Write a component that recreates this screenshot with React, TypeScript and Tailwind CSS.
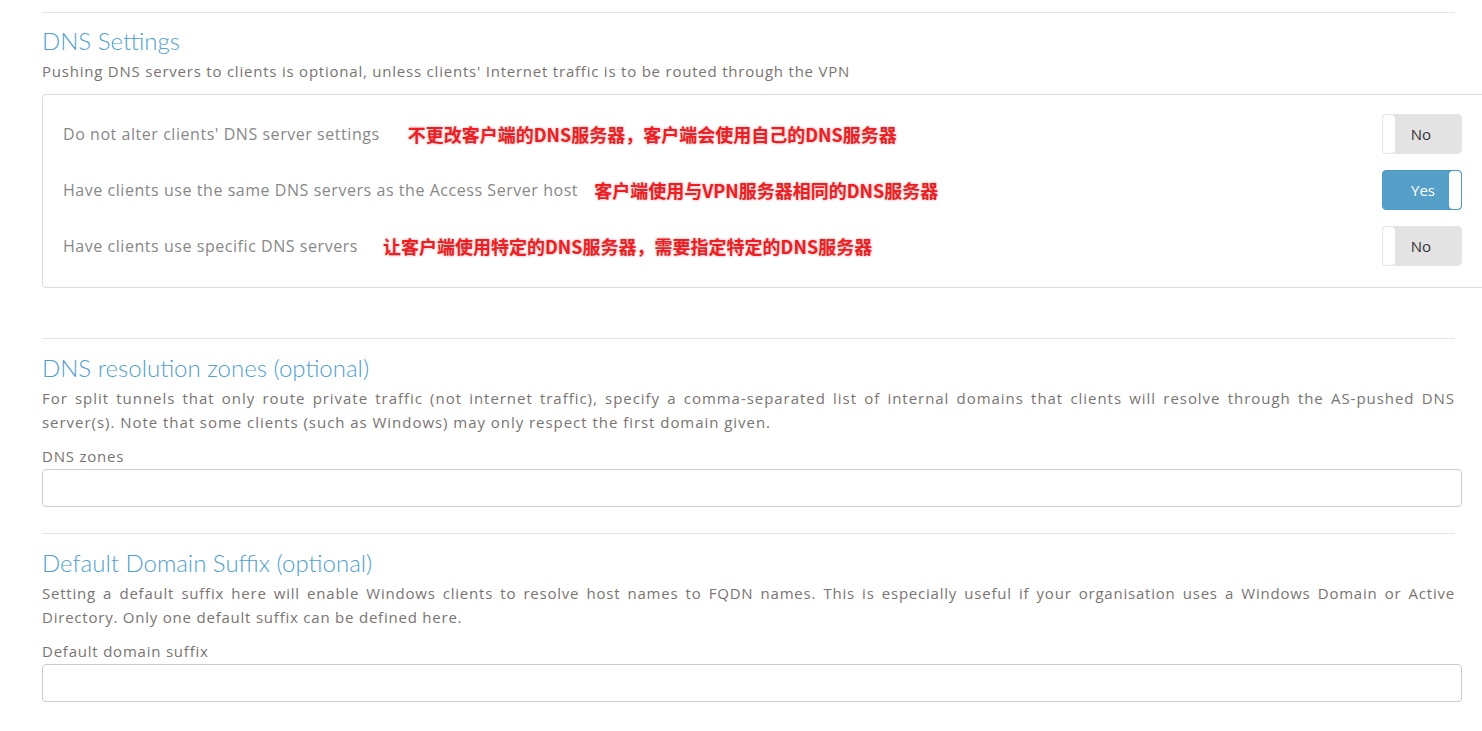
import React from 'react';

const body = { fontFamily: '"Open Sans", "Liberation Sans", sans-serif' };
const heading = { fontFamily: 'Lato, "Open Sans", sans-serif' };
const cjk = { fontFamily: '"Noto Sans CJK SC", "Noto Sans", sans-serif' };

type Row = { label: string; note: string; gap: string; on: boolean };

const rows: Row[] = [
  {
    label: "Do not alter clients' DNS server settings",
    note: '不更改客户端的DNS服务器，客户端会使用自己的DNS服务器',
    gap: 'ml-[28px]',
    on: false,
  },
  {
    label: 'Have clients use the same DNS servers as the Access Server host',
    note: '客户端使用与VPN服务器相同的DNS服务器',
    gap: 'ml-[16px]',
    on: true,
  },
  {
    label: 'Have clients use specific DNS servers',
    note: '让客户端使用特定的DNS服务器，需要指定特定的DNS服务器',
    gap: 'ml-[25px]',
    on: false,
  },
];

const Toggle = ({ on }: { on: boolean }) => {
  if (on) {
    return (
      <div className="flex h-[40px] w-[80px] items-stretch rounded-[4px] border border-[#4d97c2] bg-[#559fc9]">
        <span className="flex flex-1 items-center justify-center pl-[14px] text-[15px] text-white">Yes</span>
        <span className="w-[12px] rounded-[4px] bg-white" />
      </div>
    );
  }
  return (
    <div className="flex h-[40px] w-[80px] items-stretch rounded-[4px] border border-[#e6e6e6] bg-[#e3e3e3]">
      <span className="w-[12px] rounded-[4px] bg-white" />
      <span className="flex flex-1 items-center justify-center pr-[14px] text-[15px] text-[#333]">No</span>
    </div>
  );
};

const Section = ({
  title,
  text,
  label,
  tracking,
}: {
  title: string;
  text: string;
  label: string;
  tracking: string;
}) => (
  <div>
    <div className="mr-[7px] h-px bg-[#e5e5e5]" />
    <h2 style={heading} className="mt-[13px] text-[24px] font-light leading-[32px] text-[#4f9fcf]">
      {title}
    </h2>
    <p className={`mr-[7px] mt-[2px] text-justify text-[15px] leading-[24px] ${tracking} text-[#7a7471]`}>
      {text}
    </p>
    <div className="mt-[12px] text-[15px] leading-[20px] tracking-[0.78px] text-[#7a7471]">{label}</div>
    <input className="mt-[3px] block h-[38px] w-full rounded-[4px] border border-[#ccc] bg-white outline-none" />
  </div>
);

const App = () => {
  return (
    <div style={body} className="h-[731px] w-[1482px] overflow-hidden bg-white">
      <div className="ml-[42px] mr-[20px] pt-[12px]">
        {/* DNS Settings */}
        <div className="mr-[7px] h-px bg-[#e5e5e5]" />
        <h2 style={heading} className="mt-[12px] text-[24px] font-light leading-[32px] text-[#4f9fcf]">
          DNS Settings
        </h2>
        <p className="mt-[2px] text-[15px] leading-[24px] tracking-[0.78px] text-[#7a7471]">
          Pushing DNS servers to clients is optional, unless clients' Internet traffic is to be routed through the VPN
        </p>
        <div className="mr-[-40px] mt-[11px] flex flex-col gap-[16px] rounded-l-[4px] border border-[#dcdcdc] pb-[21px] pl-[20px] pr-[39px] pt-[19px]">
          {rows.map((r) => (
            <div key={r.label} className="flex items-center justify-between">
              <div className="flex items-center">
                <span className="text-[16px] tracking-[0.55px] text-[#888]">{r.label}</span>
                <span
                  style={cjk}
                  className={`${r.gap} text-[18px] font-bold text-[#f41c22] [text-shadow:0_0_3px_rgba(0,0,0,0.35)]`}
                >
                  {r.note}
                </span>
              </div>
              <Toggle on={r.on} />
            </div>
          ))}
        </div>

        <div className="mt-[50px]">
          <Section
            title="DNS resolution zones (optional)"
            text="For split tunnels that only route private traffic (not internet traffic), specify a comma-separated list of internal domains that clients will resolve through the AS-pushed DNS server(s). Note that some clients (such as Windows) may only respect the first domain given."
            label="DNS zones"
            tracking="tracking-[0.96px]"
          />
        </div>
        <div className="mt-[26px]">
          <Section
            title="Default Domain Suffix (optional)"
            text="Setting a default suffix here will enable Windows clients to resolve host names to FQDN names. This is especially useful if your organisation uses a Windows Domain or Active Directory. Only one default suffix can be defined here."
            label="Default domain suffix"
            tracking="tracking-[0.78px]"
          />
        </div>
      </div>
    </div>
  );
};

export default App;
